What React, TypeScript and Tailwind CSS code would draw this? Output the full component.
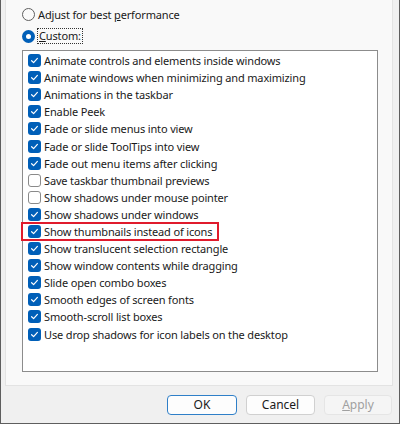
import React from "react";

type Item = { label: string; checked: boolean; highlight?: boolean };

const items: Item[] = [
  { label: "Animate controls and elements inside windows", checked: true },
  { label: "Animate windows when minimizing and maximizing", checked: true },
  { label: "Animations in the taskbar", checked: true },
  { label: "Enable Peek", checked: true },
  { label: "Fade or slide menus into view", checked: true },
  { label: "Fade or slide ToolTips into view", checked: true },
  { label: "Fade out menu items after clicking", checked: true },
  { label: "Save taskbar thumbnail previews", checked: false },
  { label: "Show shadows under mouse pointer", checked: false },
  { label: "Show shadows under windows", checked: true },
  { label: "Show thumbnails instead of icons", checked: true, highlight: true },
  { label: "Show translucent selection rectangle", checked: true },
  { label: "Show window contents while dragging", checked: true },
  { label: "Slide open combo boxes", checked: true },
  { label: "Smooth edges of screen fonts", checked: true },
  { label: "Smooth-scroll list boxes", checked: true },
  { label: "Use drop shadows for icon labels on the desktop", checked: true },
];

function CheckBox({ checked }: { checked: boolean }) {
  if (!checked) {
    return <span className="w-[13px] h-[13px] rounded-[3px] border border-[#8a8a8a] bg-white shrink-0" />;
  }
  return (
    <span className="w-[13px] h-[13px] rounded-[3px] bg-[#005fb8] shrink-0 flex items-center justify-center">
      <svg width="9" height="9" viewBox="0 0 9 9">
        <path d="M1.6 4.7 L3.6 6.6 L7.4 2.4" fill="none" stroke="#fff" strokeWidth="1.2" strokeLinecap="round" strokeLinejoin="round" />
      </svg>
    </span>
  );
}

function Radio({ selected }: { selected: boolean }) {
  if (selected) {
    return (
      <span className="w-[13px] h-[13px] rounded-full bg-[#005fb8] flex items-center justify-center shrink-0">
        <span className="w-[5px] h-[5px] rounded-full bg-white" />
      </span>
    );
  }
  return <span className="w-[13px] h-[13px] rounded-full border border-[#5f5f5f] bg-[#fbfbfb] shrink-0" />;
}

export default function App() {
  return (
    <div
      className="w-[400px] h-[424px] bg-[#f0f0f0] border-l border-r border-b border-[#5e5e5e] flex flex-col text-[11px] tracking-[-0.15px] text-[#1a1a1a]"
      style={{ fontFamily: '"Noto Sans", "Open Sans", sans-serif' }}
    >
      {/* tab page */}
      <div className="ml-[4px] w-[388px] h-[386px] bg-[#f9f9f9] border-x border-b border-[#e3e3e3] pl-[16px] flex flex-col">
        <div className="h-[8px]" />
        <div className="flex items-center h-[13px]">
          <Radio selected={false} />
          <span className="ml-[3px] leading-none">
            Adjust for best <span className="underline">p</span>erformance
          </span>
        </div>
        <div className="flex items-center h-[16px] mt-[7px]">
          <Radio selected />
          <span className="ml-[2px] px-[1px] leading-[14px] border border-dotted border-[#333]">
            <span className="underline">C</span>ustom:
          </span>
        </div>

        <div className="mt-[6px] w-[356px] h-[322px] bg-white border border-[#8c8c8c] pt-[1px] pl-[5px] flex flex-col">
          {items.map((it) => (
            <div key={it.label} className="h-[17.1px] flex items-center relative">
              <CheckBox checked={it.checked} />
              <span className="ml-[3px] leading-none whitespace-nowrap">{it.label}</span>
              {it.highlight && (
                <span className="absolute left-[-7px] top-[-1px] w-[198px] h-[19px] border-2 border-[#e01b2c]" />
              )}
            </div>
          ))}
        </div>
      </div>

      {/* buttons */}
      <div className="flex justify-end gap-[9px] pr-[7px] pt-[9px] text-[12px] tracking-normal">
        <button className="w-[70px] h-[20px] rounded-[4px] bg-[#fdfdfd] border border-[#2f7fc8] leading-none">OK</button>
        <button className="w-[69px] h-[20px] rounded-[4px] bg-[#fdfdfd] border border-[#d0d0d0] leading-none">Cancel</button>
        <button className="w-[68px] h-[20px] rounded-[4px] bg-[#f5f5f5] border border-[#e5e5e5] text-[#a0a0a0] leading-none">
          <span className="underline">A</span>pply
        </button>
      </div>
    </div>
  );
}
